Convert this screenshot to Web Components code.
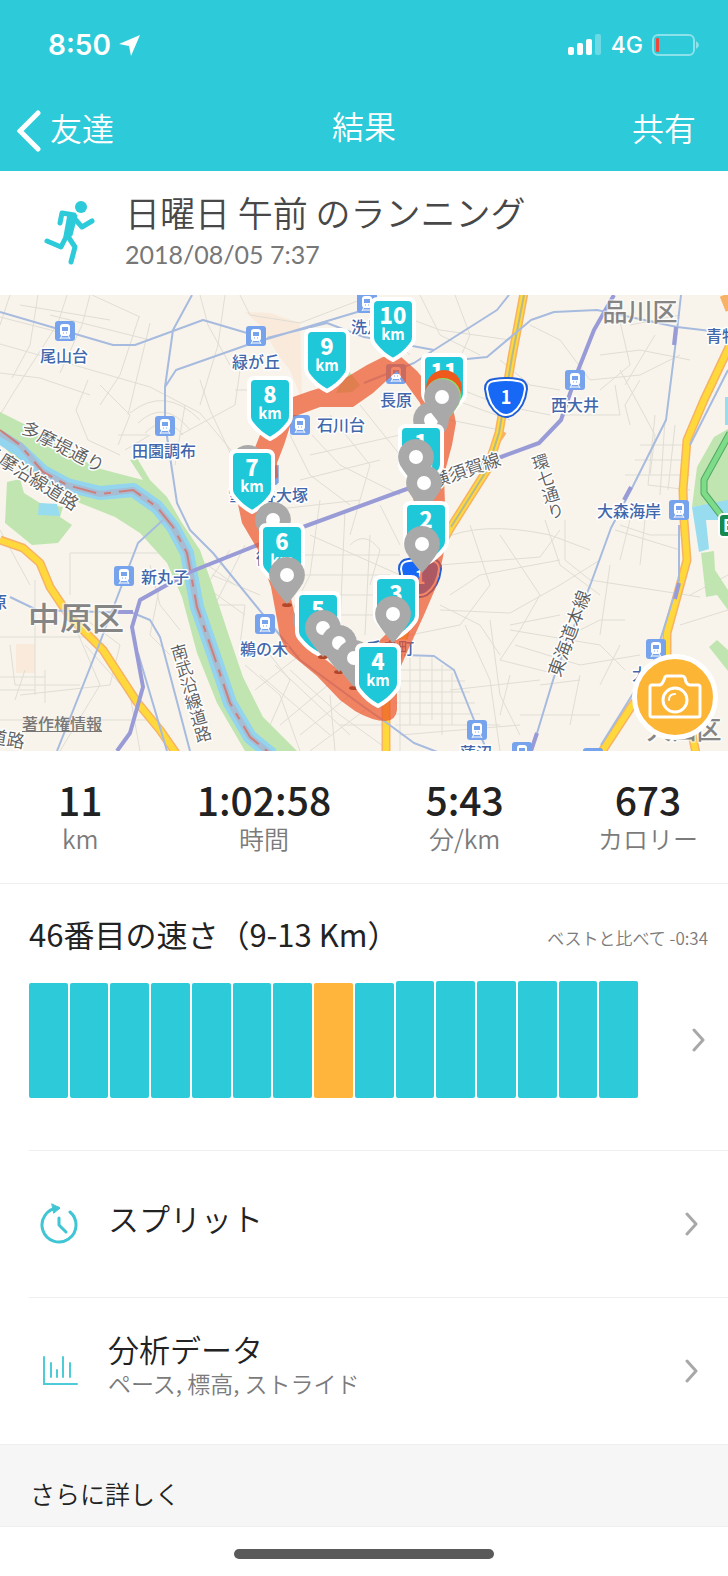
<!DOCTYPE html>
<html lang="ja">
<head>
<meta charset="UTF-8">
<meta name="viewport" content="width=device-width, initial-scale=1">
<title>結果</title>
<style>
    body {
        margin: 0;
        background: #fff;
        color: #222;
        font-family: "Noto Sans CJK JP", "Noto Sans", sans-serif;
        --teal: #2dcad9;
        --orange: #ffb53b;
        --grey: #7b7b7b;
        --line: #efefef;
    }
</style>
</head>
<body>
<run-result></run-result>

<script>
// clase base: cada elemento solo define getTemplate y getStyles
class BaseElement extends HTMLElement {
    constructor() {
        super();
        this.attachShadow({ mode: "open" });
    }

    connectedCallback() {
        const template = document.createElement('template');
        template.innerHTML = `<style>${this.getStyles()}</style>${this.getTemplate()}`;
        this.shadowRoot.replaceChildren(template.content.cloneNode(true));
    }

    getStyles() {
        return '';
    }
}

class StatusBar extends BaseElement {
    getTemplate() {
        return `
            <span class="time">8:50</span>
            <svg width="21" height="21" viewBox="0 0 21 21"><path d="M21 0 12 21 10 11 0 9z" fill="#fff"/></svg>
            <span class="space"></span>
            <svg width="34" height="22" viewBox="0 0 34 22" fill="#fff">
                <rect x="0" y="13" width="6" height="8" rx="2"/>
                <rect x="9" y="9" width="6" height="12" rx="2"/>
                <rect x="18" y="5" width="6" height="16" rx="2"/>
                <rect x="27" y="0" width="6" height="21" rx="2" opacity=".3"/>
            </svg>
            <span class="net">4G</span>
            <svg width="48" height="22" viewBox="0 0 48 22">
                <rect x="1" y="1" width="41" height="20" rx="5" fill="none" stroke="#fff" stroke-opacity=".45" stroke-width="2"/>
                <rect x="4" y="4" width="3" height="14" rx="1" fill="#f4453b"/>
                <path d="M44 7q6 4 0 8z" fill="#fff" opacity=".45"/>
            </svg>
        `;
    }

    getStyles() {
        return `
            :host {
                display: flex;
                align-items: center;
                height: 90px;
                padding: 0 28px 0 48px;
                color: #fff;
                font-family: Inter, "Liberation Sans", sans-serif;
            }
            .time { font-size: 28px; font-weight: 600; margin-right: 8px; }
            .space { flex: 1; }
            .net { font-size: 23px; font-weight: 500; margin: 0 9px; }
        `;
    }
}
customElements.define('status-bar', StatusBar);

class NavBar extends BaseElement {
    getTemplate() {
        return `
            <button class="back">
                <svg width="24" height="42" viewBox="0 0 24 42"><path d="M21 3 3 21 21 39" fill="none" stroke="#fff" stroke-width="5" stroke-linecap="round"/></svg>
                <span>友達</span>
            </button>
            <h1><slot></slot></h1>
            <button class="share">共有</button>
        `;
    }

    getStyles() {
        return `
            :host {
                display: grid;
                grid-template-columns: 1fr auto 1fr;
                align-items: center;
                height: 81px;
                padding: 0 32px 0 17px;
                box-sizing: border-box;
                color: #fff;
            }
            h1, button {
                margin: 0;
                padding: 0 0 8px;
                border: 0;
                background: none;
                color: inherit;
                font: 350 32px/48px "Noto Sans CJK JP", sans-serif;
            }
            h1 { padding: 0 0 12px 15px; }
            .back { justify-self: start; display: flex; align-items: center; gap: 9px; padding: 0; }
            .back span { padding-bottom: 8px; }
            .share { justify-self: end; }
        `;
    }
}
customElements.define('nav-bar', NavBar);

class RunSummary extends BaseElement {
    getTemplate() {
        return `
            <svg width="52" height="66" viewBox="0 0 52 66" fill="none" stroke="#2dcad9" stroke-linecap="round" stroke-linejoin="round">
                <circle cx="37" cy="7" r="6" fill="#2dcad9" stroke="none"/>
                <path d="M16 23 18 13 30 15" stroke-width="5"/>
                <path d="M30 18 38 27 48 21" stroke-width="5"/>
                <path d="M22 37 17 47 3 41" stroke-width="5"/>
                <path d="M23 35 31 47 27 62" stroke-width="5"/>
                <path d="M25 14 32 16 27 35 21 36z" fill="#2dcad9" stroke-width="3"/>
            </svg>
            <div>
                <h2><slot name="title"></slot></h2>
                <p><slot name="date"></slot></p>
            </div>
        `;
    }

    getStyles() {
        return `
            :host {
                display: flex;
                align-items: center;
                gap: 29px;
                height: 124px;
                padding: 0 44px;
            }
            h2 { margin: 0; font-size: 35px; line-height: 42px; font-weight: 350; color: #484848; }
            p { margin: 0; font-size: 25px; line-height: 42px; color: #777; font-family: Lato, sans-serif; }
        `;
    }
}
customElements.define('run-summary', RunSummary);

// pin con el kilometro
class KmPin extends BaseElement {
    getTemplate() {
        return `
            <svg width="46" height="65" viewBox="0 0 46 65">
                <path d="M8 2H38Q44 2 44 8V40Q44 45 40 49Q34 57 23 63Q12 57 6 49Q2 45 2 40V8Q2 2 8 2Z" fill="#1fc8d8" stroke="#fff" stroke-width="4"/>
            </svg>
            <b>${this.getAttribute('km')}</b>
            <small>km</small>
        `;
    }

    getStyles() {
        return `
            :host {
                display: grid;
                grid-template-rows: 31px 14px 20px;
                justify-items: center;
                isolation: isolate;
                width: 46px;
                height: 65px;
                margin-left: -23px;
                color: #fff;
                font-family: "Noto Sans CJK JP", sans-serif;
                font-weight: bold;
            }
            svg { grid-area: 1 / 1 / 4 / 2; }
            b { grid-area: 1 / 1; z-index: 1; font-size: 22px; line-height: 34px; }
            small { grid-area: 2 / 1; z-index: 1; font-size: 15px; line-height: 12px; }
        `;
    }
}
customElements.define('km-pin', KmPin);

// pin gris con un agujero blanco
class PlacePin extends BaseElement {
    getTemplate() {
        const color = this.getAttribute('color') || '#a9a9a9';
        return `
            <svg width="36" height="48" viewBox="0 0 36 48">
                <path d="M18 0A18 18 0 0 1 34 26Q28 36 18 47Q8 36 2 26A18 18 0 0 1 18 0Z" fill="${color}"/>
                <circle cx="18" cy="18" r="7" fill="#fff"/>
            </svg>
        `;
    }

    getStyles() {
        return `
            :host { display: block; margin: -18px 0 0 -18px; }
            svg { display: block; }
        `;
    }
}
customElements.define('place-pin', PlacePin);

class RouteMap extends BaseElement {
    stations() {
        const list = [
            [65, 36], [256, 41], [165, 131], [367, 8], [300, 130], [268, 180], [396, 79], [575, 85],
            [679, 215], [124, 281], [265, 329], [656, 354], [477, 435], [522, 457], [593, 463]
        ];
        return list.map(([x, y]) => `<use href="#train" x="${x - 10}" y="${y - 10}"/>`).join('');
    }

    names() {
        const list = [
            [64, 61, '尾山台'], [256, 67, '緑が丘'], [164, 156, '田園調布'], [367, 32, '洗足'],
            [341, 130, '石川台'], [268, 200, '雪が谷大塚'], [396, 105, '長原'], [575, 110, '西大井'],
            [738, 41, '青物横丁'], [629, 216, '大森海岸'], [165, 282, '新丸子'], [-1, 307, '原'],
            [264, 354, '鵜の木'], [280, 263, '御嶽山'], [390, 353, '千鳥町'], [476, 458, '蓮沼'],
            [656, 379, '大森町']
        ];
        return list.map(([x, y, name]) => `<text x="${x}" y="${y + 6}">${name}</text>`).join('');
    }

    // de atras hacia delante
    pins() {
        const list = [
            [327, 33, 9], [393, 2, 10], [270, 81, 8], [444, 58, 11],
            [444, 93, '#f0591c'], [443, 101, '#8ee06a'], [431, 125], [442, 102],
            [421, 129, 1], [416, 162], [424, 188], [248, 168], [252, 154, 7],
            [426, 206, 2], [422, 249], [273, 225], [282, 228, 6], [287, 280],
            [396, 280, 3], [393, 319], [311, 325], [318, 296, 5], [323, 333],
            [339, 348], [354, 363], [378, 348, 4]
        ];
        return list.map(([x, y, kind]) => {
            const place = `style="left:${x / 7.28}%;top:${y / 4.56}%"`;
            if (typeof kind === 'number') {
                return `<km-pin km="${kind}" ${place}></km-pin>`;
            }
            return `<place-pin color="${kind || ''}" ${place}></place-pin>`;
        }).join('');
    }

    getTemplate() {
        return `
            <svg class="map" viewBox="0 0 728 456">
                <defs>
                    <g id="train">
                        <rect width="20" height="20" rx="3" fill="#76a3ec"/>
                        <rect x="5" y="3" width="10" height="12" rx="3" fill="#fff"/>
                        <rect x="7" y="6" width="6" height="4" fill="#76a3ec"/>
                        <path d="M8 12H9M11 12H12" stroke="#76a3ec" stroke-width="1"/>
                        <path d="M7 14 5 18M13 14 15 18M6 17H14" stroke="#fff" stroke-width="1"/>
                    </g>
                    <g id="shield">
                        <path d="M-12-18Q0-20 12-18Q21-17 21-8Q19 10 7 18Q0 22-7 18Q-19 10-21-8Q-21-17-12-18Z" fill="#fff" stroke="#1e5fd8" stroke-width="2"/>
                        <path d="M-11-15Q0-17 11-15Q18-15 18-8Q16 8 6 15Q0 19-6 15Q-16 8-18-8Q-18-15-11-15Z" fill="#1768f5"/>
                        <text y="7" fill="#fff" font-size="18" font-weight="bold" text-anchor="middle">1</text>
                    </g>
                </defs>
                <rect width="728" height="456" fill="#f8f4ec"/>
                <path d="M245 17 270 18 300 28 302 105 290 75 278 60 262 32zM16 349H35V378H16z" fill="#f9eadb"/>

                <!-- calles pequeñas -->
                <g fill="none" stroke="#dfddd4" stroke-width="1">
                    <path d="M10 0 0 30M67 0 58 28 12 100 0 120M0 49 60 66 150 92 200 118 260 190M0 78 40 83 90 100M38 0 30 50 12 83M90 0 82 30 60 78M139 22 120 80 100 110M150 28 128 120M50 20 150 45M20 10 110 25M92 0 140 22M200 0 208 30 230 70M225 0 218 50 200 110M240 0 250 20 300 28 360 5M88 85 76 115 88 145 120 160M100 90 130 120 118 150M130 118Q165 90 200 125M138 128Q165 103 190 135M145 138Q165 118 183 140M118 140H148M125 155 150 140M185 110 175 170M210 115 250 200 300 240M235 95H250M200 85 210 115M240 75 235 110 180 140M10 170 25 160 12 230M0 22 70 40"/>
                    <path d="M290 140 310 180 350 210M312 140 340 170 400 200M330 120 370 170 350 240M360 110 400 160M310 160 400 140M300 185 380 165M270 215 360 205M320 205 310 280 290 320M345 215 340 330M370 240 365 340M300 260H400M305 280H390M300 300H380M315 320H375M310 240 400 280M380 210 400 250M350 250Q365 235 380 255L370 290M420 0 440 40 480 60M400 20 440 35 510 45M455 0 470 40 455 75M380 30 410 60M450 90 500 110 550 120M455 105 510 125M450 125 500 135M530 30 560 45 590 85M500 65 530 90 560 95M615 5 630 70 600 95M630 30 680 20M600 60 640 55 690 65M655 40 625 90M680 60 640 80 590 85M620 75 655 140 650 180M560 120H620L615 90M640 85 625 110 630 130M655 120 648 190 690 195M665 125 660 200M675 130 668 195M640 150H690M635 165H690M625 180H690"/>
                    <path d="M440 245Q480 225 550 240L590 255M440 270 540 262 560 235M565 225V265L590 285 700 302M450 300 480 280 560 265M470 230 490 290 460 330 360 350M440 315 510 318 560 290 600 265M500 240 540 300 520 335 500 365 560 380M560 320 510 330M545 225 560 270 600 300M620 230 650 240 690 240M615 235 680 255M630 225 620 265M645 225 640 270M570 340 600 325 625 325M600 390 620 350M510 335 600 350 625 375M515 350 580 370 640 360M490 325 500 400 520 440M440 310 480 330 500 360M465 330 490 385 500 456M400 365 400 456M410 362V430M420 362V430M432 362V425M442 370V440M452 378V430M395 375H455M395 386H465M395 397H470M395 408H475M395 419H480M395 430H500M450 395 540 385M400 440 520 430M510 380 500 420M540 390 580 385M580 380 570 430M520 420H600M690 300 728 280M680 330 728 315M610 270 600 340"/>
                    <path d="M70 258H180M70 258V300M35 285V400M0 342H90M10 350 15 390H80M0 382H45M45 375V408M25 375 15 405M80 320 120 350 110 390M70 320 100 390 60 456M0 425H150M20 400 110 390M85 350 130 400 140 456M150 270 160 310 180 335M160 290 150 340 170 360M205 268 235 290M212 280 260 300M230 255 200 300M245 250 215 310M210 295 245 320M215 310H245L240 350M245 370 280 400 300 456M270 360 290 385 270 430M290 375 340 420 390 456M255 395 300 360M280 430 340 380M300 440 350 400M310 456 365 415M260 380 330 440M275 370 350 440M335 456 330 400M340 430H390M0 235 30 290M0 395H35"/>
                </g>

                <!-- parques y agua -->
                <g fill="#c0e5b0">
                    <path d="M0 117 30 132 60 152 97 173 143 185 130 165 137 163 150 185 167 202 182 228 200 255 213 292 227 335 243 382 263 422 297 456H245L217 408 197 358 182 302 167 268 140 238 115 222 80 208 33 182 0 148z"/>
                    <path d="M7 187 20 184 24 198 40 208 63 212 60 222 72 230 58 248 32 250 5 228z"/>
                    <path d="M728 134 714 142 697 172 692 212 728 206zM701 258 714 256 715 275 728 295V315L717 300 706 302zM717 345 728 355V376L709 352zM348 75 360 90 352 97 336 98z"/>
                </g>
                <path d="M39 208 57 209 60 221 38 220zM692 212 728 205V225H706L709 254 699 257zM725 102H728V130H725z" fill="#98dcf0"/>
                <path d="M0 142 20 155 43 177 67 190 100 198 133 195 157 212 173 232 187 258 197 312 213 358 230 408 250 442 272 460" fill="none" stroke="#93d4ee" stroke-width="14" stroke-linejoin="round"/>
                <path d="M0 138 20 150 43 177 67 190 100 199 133 195 157 212 173 232 187 258 197 312 213 358 230 408 250 442 272 460" fill="none" stroke="#a6bdd3" stroke-width="6" stroke-linejoin="round"/>
                <path d="M0 135 20 150 43 177 67 190 100 199 133 195 157 212 173 232 187 258 197 312 213 358 230 408 250 442 272 460" fill="none" stroke="#cc7f7c" stroke-width="2" stroke-dasharray="24 8 7 8"/>

                <!-- carreteras -->
                <g fill="none" stroke-linejoin="round">
                    <path d="M0 245 23 253 40 268 50 292 70 322 103 355 137 407 160 435 176 458M524-2 512 62 499 138 487 175 451 232 418 290 404 340 386 400 386 458M730 50 704 105 687 145 683 195 684 225 687 265 667 338 667 365 631 412 601 458M690 430 696 458M724 0 730 15M496 137 504 142" stroke="#f7b265" stroke-width="9"/>
                    <path d="M0 245 23 253 40 268 50 292 70 322 103 355 137 407 160 435 176 458M524-2 512 62 499 138 487 175 451 232 418 290 404 340 386 400 386 458M730 50 704 105 687 145 683 195 684 225 687 265 667 338 667 365 631 412 601 458M690 430 696 458" stroke="#ffd83c" stroke-width="6"/>
                    <path d="M524 0 512 62 499 138 487 175 451 232" stroke="#b9b98f" stroke-width="2"/>
                    <path d="M730 138 704 185 704 198 724 224" stroke="#4fa765" stroke-width="7"/>
                    <path d="M730 138 704 185 704 198 724 224" stroke="#7edb88" stroke-width="5"/>
                </g>

                <!-- trenes -->
                <g fill="none" stroke="#a7bbdf" stroke-width="2" stroke-linejoin="round">
                    <path d="M0 17 113 50H135L203 25 247 38M192 0 173 35 165 92V128L177 208 190 235 213 258 300 365 364 412 387 428 414 448 440 458M165 92 176 75 247 50 364 15M267 43 327 28 364 42 434 55M364 88 414 68 434 55 497 15 509 0M467 64 487 62 531 25 554 17 597 15 677 32 728 38M681 0 676 45 666 125 631 195 611 233 591 288 554 382 531 458M163 225 138 248 97 355 57 456M10 302 37 315 133 318 150 325 160 342 190 456M138 358 167 456M404 360 434 361 454 375 474 425 487 456M728 75 690 150M679 230V285L654 365 601 450M278 170V188"/>
                </g>
                <g fill="none" stroke="#999bd7" stroke-width="4" stroke-linejoin="round">
                    <path d="M614 0 594 35 577 78 561 125 539 148 501 162 404 195 303 232 190 277 140 305 132 332 143 392 130 438 117 456M118 317H133M676 32 674 50M631 192 624 205M679 288 675 304M537 438 531 456"/>
                </g>

                <g transform="translate(506 102)"><use href="#shield"/></g>
                <g transform="translate(420 282)"><use href="#shield"/></g>
                <g class="names">${this.stations()}${this.names()}</g>
                <path fill="#ec5226" fill-opacity=".7" fill-rule="evenodd" d="M383 62 400 61 417 76 430 92 452 108 456 128 452 150 444 180 446 240 443 262 436 292 424 320 408 355 397 380V415Q396 425 386 426Q372 426 355 416L340 405 317 381 288 357Q279 345 278 330L271 292 258 255 242 228 236 200 250 165 260 140 278 112 293 102 310 96 330 90 347 82 367 70ZM397 76 420 108 432 150 408 180 412 200 424 240 420 280 395 330 380 345 372 380 357 390 330 368 300 345 293 312 288 290 275 250 258 215 262 195 278 182 277 168 284 150 293 122 320 112H353L373 98Z"/>
                <g fill="#b2472a">
                    <ellipse cx="287" cy="310" rx="5" ry="2"/>
                    <ellipse cx="323" cy="362" rx="5" ry="2"/>
                    <ellipse cx="339" cy="377" rx="5" ry="2"/>
                    <ellipse cx="354" cy="393" rx="5" ry="2"/>
                </g>

                <g class="roads">
                    <text transform="translate(20 137) rotate(27)">多摩堤通り</text>
                    <text transform="translate(-18 159) rotate(32)">多摩沿線道路</text>
                    <text transform="translate(-12 447) rotate(10)">道路</text>
                    <text class="down" transform="translate(177 349) rotate(-16)">南武沿線道路</text>
                    <text class="down" transform="translate(538 159) rotate(-17)">環七通り</text>
                    <text transform="translate(560 383) rotate(-70)">東海道本線</text>
                    <text transform="translate(434 193) rotate(-19)">横須賀線</text>
                </g>
                <g class="wards">
                    <text x="640" y="26" font-size="25">品川区</text>
                    <text x="76" y="335" font-size="32">中原区</text>
                    <text x="684" y="444" font-size="25">大田区</text>
                </g>
                <rect x="719" y="219" width="30" height="23" rx="4" fill="#168a4e" stroke="#fff" stroke-width="2"/>
                <text x="723" y="237" fill="#fff" font-size="17" font-weight="bold">E</text>
            </svg>
            <div class="pins">${this.pins()}</div>
            <a href="#legal">著作権情報</a>
            <button aria-label="写真">
                <svg width="54" height="46" viewBox="0 0 54 46" fill="none" stroke="#fff" stroke-width="3" stroke-linejoin="round">
                    <path d="M4 11H12Q15 10 17 3Q18 2 19 2H34Q36 2 37 4Q38 11 42 11H50Q52 11 52 13V41Q52 43 50 43H4Q2 43 2 41V13Q2 11 4 11Z"/>
                    <circle cx="27" cy="26" r="12"/>
                    <path d="M21 26Q21 20 27 20" stroke-width="2" stroke-linecap="round"/>
                </svg>
            </button>
        `;
    }

    getStyles() {
        return `
            :host { display: block; position: relative; overflow: hidden; aspect-ratio: 728 / 456; }
            .map { display: block; width: 100%; height: 100%; }
            .names text, .roads text, .wards text {
                paint-order: stroke;
                stroke: #fff;
                stroke-width: 3px;
                stroke-linejoin: round;
            }
            .names text { font-size: 16px; font-weight: 500; fill: #4267aa; text-anchor: middle; }
            .roads text { font-size: 18px; font-weight: 350; fill: #5c5c5c; }
            .roads .down { writing-mode: vertical-rl; font-size: 17px; }
            .wards text { font-weight: 500; fill: #858585; stroke-opacity: .6; text-anchor: middle; }
            .pins > * { position: absolute; }
            a {
                position: absolute;
                left: 22px;
                bottom: 16px;
                font-size: 16px;
                line-height: 24px;
                font-weight: 500;
                color: #777;
            }
            button {
                position: absolute;
                right: 10px;
                bottom: 11px;
                display: flex;
                align-items: center;
                justify-content: center;
                width: 86px;
                height: 86px;
                padding: 0;
                border: 5px solid #fff;
                border-radius: 50%;
                background: #fdb535;
            }
        `;
    }
}
customElements.define('route-map', RouteMap);

class StatItem extends BaseElement {
    getTemplate() {
        return `
            <strong>${this.getAttribute('value')}</strong>
            <span><slot></slot></span>
        `;
    }

    getStyles() {
        return `
            :host { display: flex; flex-direction: column; align-items: center; }
            strong { font-size: 39px; line-height: 44px; font-weight: 500; }
            span { font-size: 25px; line-height: 34px; font-weight: 350; color: var(--grey); }
        `;
    }
}
customElements.define('stat-item', StatItem);

class StatList extends BaseElement {
    getTemplate() {
        return `<slot></slot>`;
    }

    getStyles() {
        return `
            :host {
                display: flex;
                justify-content: space-between;
                padding: 26px 30px 28px 58px;
                border-bottom: 1px solid var(--line);
            }
        `;
    }
}
customElements.define('stat-list', StatList);

class ChevronIcon extends BaseElement {
    getTemplate() {
        return `<svg width="13" height="24" viewBox="0 0 13 24"><path d="M2 2 11 12 2 22" fill="none" stroke="#a8a8a8" stroke-width="3" stroke-linecap="round" stroke-linejoin="round"/></svg>`;
    }

    getStyles() {
        return `
            :host { display: block; }
            svg { display: block; }
        `;
    }
}
customElements.define('chevron-icon', ChevronIcon);

class SpeedChart extends BaseElement {
    getTemplate() {
        const bars = [115, 115, 115, 115, 115, 115, 115, 115, 115, 117, 117, 117, 117, 117, 117];
        const current = 7;
        return `
            <header>
                <h3><slot name="title"></slot></h3>
                <p><slot name="note"></slot></p>
            </header>
            <a href="#ranking" aria-label="速さの順位">
                <div class="bars">
                    ${bars.map((h, i) => `<i class="${i === current ? 'current' : ''}" style="height:${h}px"></i>`).join('')}
                </div>
                <chevron-icon></chevron-icon>
            </a>
        `;
    }

    getStyles() {
        return `
            :host { display: block; padding: 30px 20px 52px 29px; }
            header { display: flex; justify-content: space-between; align-items: center; }
            h3 { margin: 0; font-size: 31px; line-height: 40px; font-weight: 400; }
            p { margin: 0; padding-top: 8px; font-size: 17px; line-height: 26px; font-weight: 350; color: var(--grey); }
            a { display: flex; align-items: center; gap: 54px; margin-top: 27px; padding-right: 3px; }
            .bars { flex: 1; display: flex; align-items: flex-end; gap: 2px; height: 117px; }
            i { flex: 1; background: var(--teal); border-radius: 2px; }
            .current { background: var(--orange); }
        `;
    }
}
customElements.define('speed-chart', SpeedChart);

class MenuRow extends BaseElement {
    getTemplate() {
        return `
            <a href="${this.getAttribute('href')}">
                <slot name="icon"></slot>
                <span class="text">
                    <span class="label"><slot></slot></span>
                    <slot name="detail"></slot>
                </span>
                <chevron-icon></chevron-icon>
            </a>
        `;
    }

    getStyles() {
        return `
            :host { display: block; margin-left: 29px; border-top: 1px solid var(--line); }
            a {
                display: flex;
                align-items: center;
                height: 146px;
                padding: 0 30px 0 10px;
                color: inherit;
                text-decoration: none;
            }
            .text { flex: 1; margin-left: 29px; padding-bottom: 12px; }
            .label { display: block; font-size: 31px; line-height: 36px; font-weight: 350; }
            ::slotted([slot=detail]) { display: block; font-size: 23px; line-height: 32px; font-weight: 350; color: var(--grey); }
        `;
    }
}
customElements.define('menu-row', MenuRow);

class MoreDetails extends BaseElement {
    getTemplate() {
        return `
            <h3><slot></slot></h3>
            <div class="home"></div>
        `;
    }

    getStyles() {
        return `
            :host { display: block; }
            h3 {
                margin: 0;
                padding: 32px 30px 17px;
                font-size: 25px;
                line-height: 32px;
                font-weight: 350;
                background: #f6f6f6;
                border-top: 1px solid var(--line);
                border-bottom: 1px solid var(--line);
            }
            .home { width: 260px; height: 10px; margin: 22px auto 16px; border-radius: 5px; background: #5a5a5a; }
        `;
    }
}
customElements.define('more-details', MoreDetails);

class RunResult extends BaseElement {
    getTemplate() {
        return `
            <div class="top">
                <status-bar></status-bar>
                <nav-bar>結果</nav-bar>
            </div>
            <run-summary>
                <span slot="title">日曜日 午前 のランニング</span>
                <span slot="date">2018/08/05 7:37</span>
            </run-summary>
            <route-map></route-map>
            <stat-list>
                <stat-item value="11">km</stat-item>
                <stat-item value="1:02:58">時間</stat-item>
                <stat-item value="5:43">分/km</stat-item>
                <stat-item value="673">カロリー</stat-item>
            </stat-list>
            <speed-chart>
                <span slot="title">46番目の速さ（9-13 Km）</span>
                <span slot="note">ベストと比べて -0:34</span>
            </speed-chart>
            <menu-row href="#splits">
                <svg slot="icon" width="40" height="42" viewBox="0 0 40 42" fill="none" stroke="#3fc5d3" stroke-width="3" stroke-linecap="round" stroke-linejoin="round">
                    <path d="M31 9A17 17 0 1 1 19 5"/>
                    <path d="M13 1 21 5 15 10z" fill="#3fc5d3" stroke-width="1"/>
                    <path d="M20 15V22L27 29"/>
                </svg>
                スプリット
            </menu-row>
            <menu-row href="#analysis">
                <svg slot="icon" width="40" height="30" viewBox="0 0 40 30" fill="none" stroke="#4dcbd8" stroke-width="2" stroke-linecap="round">
                    <path d="M5 1V28H38M12 7V21M18 14V21M24 1V21M31 7V21"/>
                </svg>
                分析データ
                <span slot="detail">ペース, 標高, ストライド</span>
            </menu-row>
            <more-details>さらに詳しく</more-details>
        `;
    }

    getStyles() {
        return `
            :host { display: block; }
            .top { background: var(--teal); }
        `;
    }
}
customElements.define('run-result', RunResult);
</script>
</body>
</html>
